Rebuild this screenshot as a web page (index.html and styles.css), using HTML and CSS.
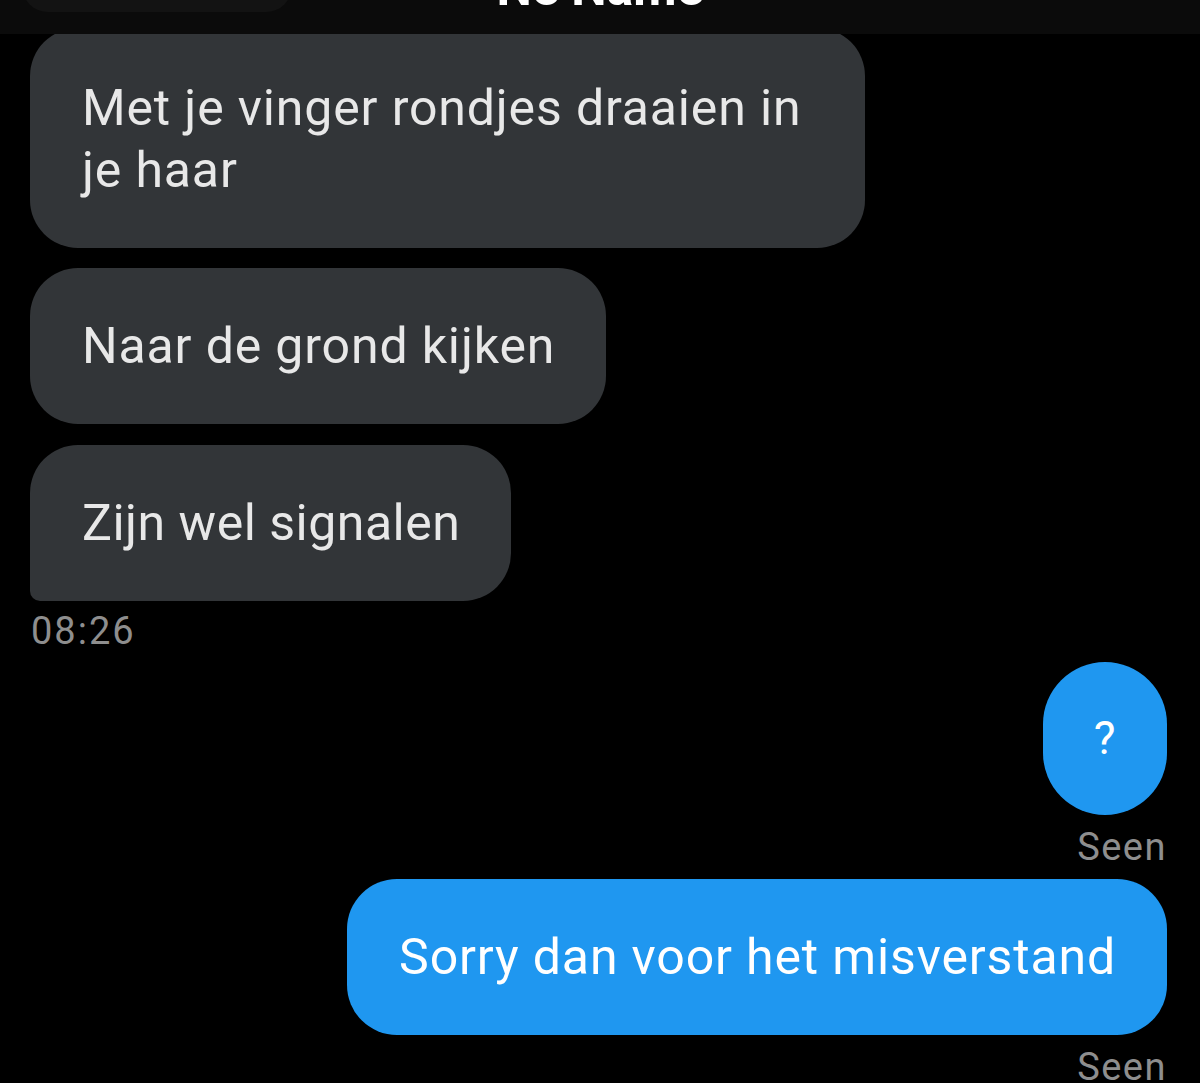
FILE: index.html
```html
<!DOCTYPE html>
<html lang="nl">
<head>
<meta charset="utf-8">
<title>Ne Name</title>
<link rel="stylesheet" href="styles.css">
</head>
<body>
<header class="topbar">
  <div class="topbar-pill"></div>
  <div class="topbar-title">Ne Name</div>
</header>
<main class="chat">
  <div class="row row-in">
    <div class="bubble bubble-in bubble-wide">Met je vinger rondjes draaien in je haar</div>
  </div>
  <div class="row row-in">
    <div class="bubble bubble-in">Naar de grond kijken</div>
  </div>
  <div class="row row-in row-in-last">
    <div class="bubble bubble-in bubble-last">Zijn wel signalen</div>
  </div>
  <div class="time">08:26</div>
  <div class="row row-out">
    <div class="bubble bubble-out bubble-q">?</div>
  </div>
  <div class="seen">Seen</div>
  <div class="row row-out">
    <div class="bubble bubble-out">Sorry dan voor het misverstand</div>
  </div>
  <div class="seen">Seen</div>
</main>
</body>
</html>
```

FILE: styles.css
```css
html, body {
  margin: 0;
  padding: 0;
  background: #000;
}
body {
  width: 1200px;
  height: 1083px;
  overflow: hidden;
  position: relative;
  font-family: Roboto, "Noto Sans", "Liberation Sans", sans-serif;
}
.topbar {
  position: absolute;
  top: 0;
  left: 0;
  right: 0;
  height: 34px;
  background: #0b0b0b;
  overflow: hidden;
  z-index: 2;
}
.topbar-pill {
  position: absolute;
  left: 22px;
  top: -40px;
  width: 270px;
  height: 52px;
  background: #131313;
  border-radius: 26px;
}
.topbar-title {
  position: absolute;
  left: 0;
  right: 0;
  top: -37px;
  text-align: center;
  font-size: 50px;
  line-height: 50px;
  font-weight: 700;
  color: #fff;
}
.chat {
  display: flex;
  flex-direction: column;
  padding: 28px 33px 0 30px;
}
.row {
  display: flex;
}
.row-in {
  justify-content: flex-start;
  margin-bottom: 20px;
}
.row-in:nth-child(2) {
  margin-bottom: 21px;
}
.row-in-last {
  margin-bottom: 0;
}
.row-out {
  justify-content: flex-end;
}
.bubble {
  box-sizing: border-box;
  max-width: 835px;
  padding: 48px 51px 47px 52px;
  font-size: 50px;
  line-height: 61px;
  letter-spacing: 0.85px;
  border-radius: 48px;
}
.bubble-in {
  background: #323538;
  color: #e8e8e8;
}
.bubble-wide {
  padding-top: 49px;
  padding-bottom: 47px;
  line-height: 62px;
}
.bubble-last {
  border-bottom-left-radius: 10px;
  letter-spacing: 0.5px;
}
.bubble-out {
  background: #1f97f0;
  color: #fff;
  border-radius: 50px;
}
.bubble-q {
  width: 124px;
  height: 153px;
  padding: 0;
  display: flex;
  align-items: center;
  justify-content: center;
  border-radius: 62px;
  font-size: 46px;
}
.time {
  margin-top: 9px;
  margin-bottom: 10px;
  font-size: 38px;
  line-height: 42px;
  letter-spacing: 2px;
  color: #8e8e8e;
  padding-left: 1px;
}
.seen {
  align-self: flex-end;
  margin-top: 11px;
  margin-bottom: 11px;
  font-size: 38px;
  line-height: 42px;
  letter-spacing: 1.5px;
  color: #8e8e8e;
}
```
